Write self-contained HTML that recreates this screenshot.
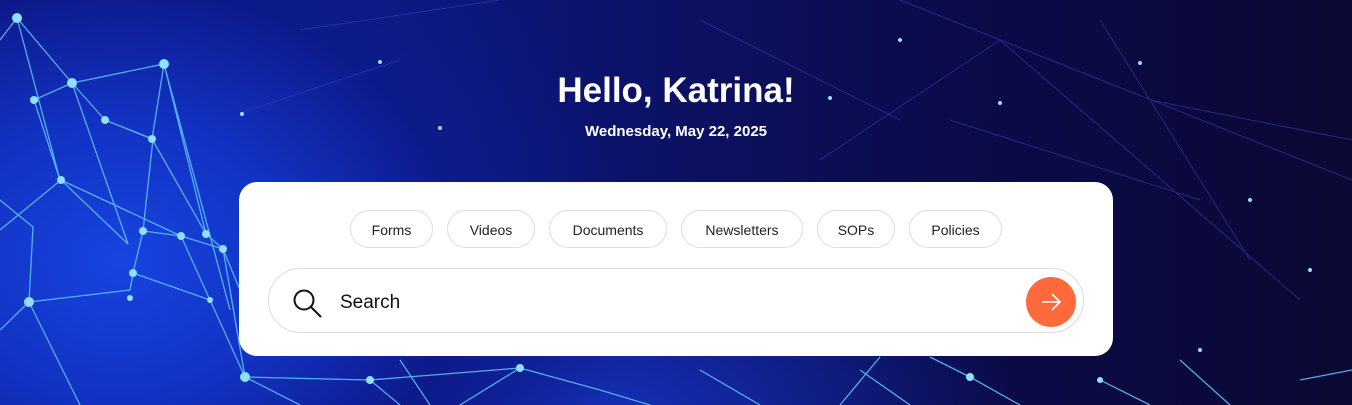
<!DOCTYPE html>
<html><head><style>
*{margin:0;padding:0;box-sizing:border-box}
body{width:1352px;height:405px;overflow:hidden;font-family:"Liberation Sans",sans-serif;position:relative;
background:radial-gradient(ellipse 520px 420px at 120px 260px,#1844e0 0%,#1231c0 35%,#0d1a8a 65%,transparent 100%),
radial-gradient(ellipse 600px 300px at 600px 420px,#1530b8 0%,transparent 70%),
linear-gradient(90deg,#0f22a0 0%,#0c1470 40%,#0b0b4a 70%,#0b0833 100%);}
svg.bg{position:absolute;left:0;top:0}
h1{position:absolute;top:71px;width:100%;text-align:center;color:#fff;font-size:35px;font-weight:bold}
.date{position:absolute;top:123px;width:100%;text-align:center;color:#fff;font-size:15px;font-weight:bold}
.card{position:absolute;left:239px;top:182px;width:874px;height:174px;background:#fff;border-radius:18px}
.chip{position:absolute;top:28px;height:38px;border:1px solid #dcdcdc;border-radius:19px;font-size:14px;color:#222;display:flex;align-items:center;justify-content:center;padding-top:2px}
.search{position:absolute;left:29px;top:86px;width:816px;height:65px;border:1px solid #dcdcdc;border-radius:33px}
.search span{position:absolute;left:71px;top:23px;font-size:19px;color:#111}
.btn{position:absolute;left:757px;top:8px;width:50px;height:50px;border-radius:25px;background:#ff6a3d}
</style></head><body>
<svg class="bg" width="1352" height="405">
<g opacity="0.85" stroke="#5fc8ff" stroke-width="1.3" fill="none">
<path d="M17 18 L72 83 L164 64 L152 139 L105 120 L72 83 M17 18 L0 40 M17 18 L60 180 L34 100 L72 83 M72 83 L128 244 L61 180 L0 230 M105 120 L153 139 L143 231 L181 236 L223 249 L206 234 L152 139 M164 64 L206 234 M164 64 L230 310 M61 180 L181 236 L223 249 L245 377 M29 302 L0 330 M29 302 L33 227 L0 200 M29 302 L130 290 L133 273 M29 302 L80 405 M133 273 L210 300 L245 377 L300 405 M143 231 L133 273 M181 236 L210 300 M223 249 L240 290 M245 377 L370 380 L520 368 L600 390 M370 380 L400 405 M520 368 L460 405 M600 390 L650 405 M700 370 L760 405 M860 370 L910 405 M970 377 L1020 405 M1100 380 L1150 405 M1180 360 L1230 405 M1300 380 L1352 370 M400 360 L430 405 M880 357 L840 405 M970 377 L930 357"/>
</g>
<g stroke="#3a3ab8" stroke-width="1" opacity="0.6" fill="none">
<path d="M900 0 L1352 180 M1000 40 L1300 300 M1100 20 L1250 260 M1150 100 L1352 140 M820 160 L1000 40 M950 120 L1200 200 M300 30 L500 0 M240 113 L400 60 M700 20 L900 120"/>
</g>
<g fill="#8fe0ff">
<circle cx="17" cy="18" r="5"/><circle cx="72" cy="83" r="5"/><circle cx="164" cy="64" r="5"/><circle cx="152" cy="139" r="4"/><circle cx="105" cy="120" r="4"/><circle cx="34" cy="100" r="4"/><circle cx="61" cy="180" r="4"/><circle cx="143" cy="231" r="4"/><circle cx="181" cy="236" r="4"/><circle cx="223" cy="249" r="4"/><circle cx="206" cy="234" r="4"/><circle cx="29" cy="302" r="5"/><circle cx="133" cy="273" r="4"/><circle cx="245" cy="377" r="5"/><circle cx="370" cy="380" r="4"/><circle cx="520" cy="368" r="4"/><circle cx="970" cy="377" r="4"/><circle cx="1100" cy="380" r="3"/><circle cx="130" cy="298" r="3"/><circle cx="210" cy="300" r="3"/>
<circle cx="380" cy="62" r="2"/><circle cx="1000" cy="103" r="2"/><circle cx="1140" cy="63" r="2"/><circle cx="1250" cy="200" r="2"/><circle cx="1310" cy="270" r="2"/><circle cx="1200" cy="350" r="2"/><circle cx="242" cy="114" r="2"/><circle cx="440" cy="128" r="2"/><circle cx="830" cy="98" r="2"/><circle cx="900" cy="40" r="2"/>
</g>
</svg>
<h1>Hello, Katrina!</h1>
<div class="date">Wednesday, May 22, 2025</div>
<div class="card">
<div class="chip" style="left:111px;width:83px">Forms</div>
<div class="chip" style="left:208px;width:88px">Videos</div>
<div class="chip" style="left:310px;width:118px">Documents</div>
<div class="chip" style="left:442px;width:122px">Newsletters</div>
<div class="chip" style="left:578px;width:78px">SOPs</div>
<div class="chip" style="left:670px;width:93px">Policies</div>
<div class="search">
<svg style="position:absolute;left:23px;top:20px" width="32" height="32" fill="none" stroke="#111" stroke-width="2"><circle cx="12" cy="11" r="9.5"/><path d="M19 18 L29 28"/></svg>
<span>Search</span>
<div class="btn"><svg width="50" height="50" fill="none" stroke="#fff" stroke-width="1.6"><path d="M16 25 H34 M26 17 L34 25 L26 33"/></svg></div>
</div>
</div>
</body></html>
